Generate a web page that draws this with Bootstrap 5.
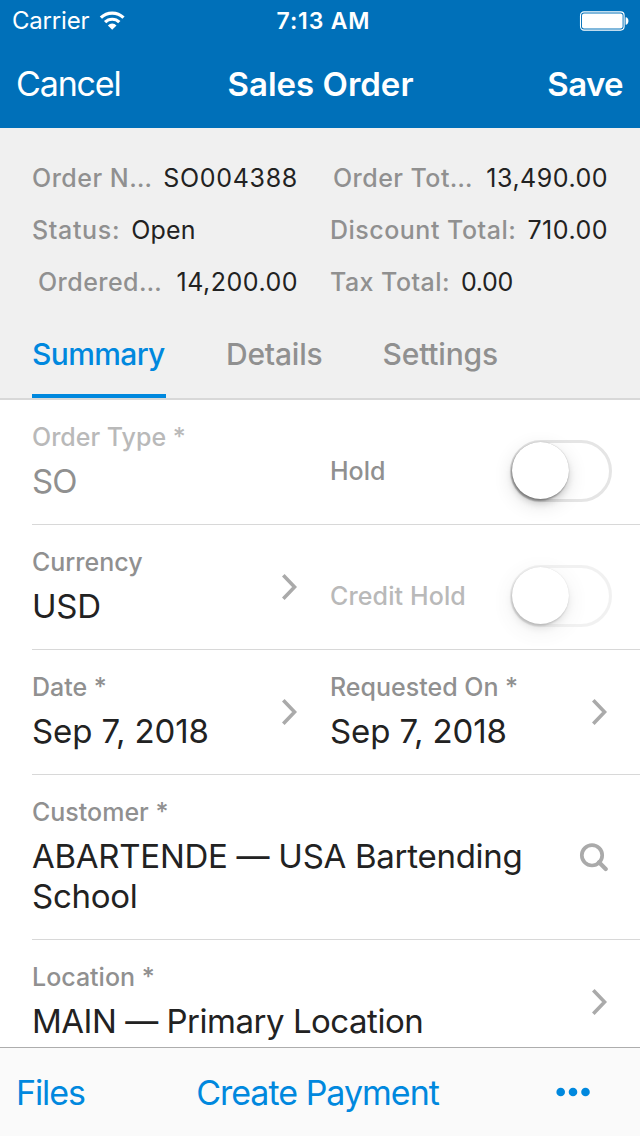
<!DOCTYPE html>
<html lang="en">
<head>
<meta charset="utf-8">
<meta name="viewport" content="width=device-width, initial-scale=1">
<title>Sales Order</title>
<link rel="stylesheet" href="https://cdn.jsdelivr.net/npm/bootstrap@5.3.0/dist/css/bootstrap.min.css">
<style>
  body { font-family: Inter, "Liberation Sans", sans-serif; color: #222; background: #fff; }
  .app { height: 1136px; overflow: hidden; }
  .app a { color: inherit; text-decoration: none; }

  .topbar { background: #0070b9; height: 128px; }
  .status { height: 40px; padding: 1px 11px 0 12px; font-size: 24px; line-height: 40px; letter-spacing: -.2px; }
  .status .clock { font-size: 23px; font-weight: 600; letter-spacing: .85px; padding-left: 6px; }
  .side { flex: 1 1 0; }
  .titlebar { height: 88px; padding: 0 17px 0 16px; font-size: 33px; line-height: 88px; font-weight: 600; letter-spacing: 0; }
  .titlebar .title { padding-left: 2px; }
  .titlebar .cancel { font-size: 34px; font-weight: 400; letter-spacing: -1.15px; }
  .titlebar .save { letter-spacing: -.6px; }

  .overview { background: #f0f0f0; height: 272px; border-bottom: 2px solid #d8d8d8; }
  .facts { height: 190px; padding: 24px 32px 0; column-gap: 32px; font-size: 25px; line-height: 52px; letter-spacing: .5px; }
  .facts .col-a { width: 266px; }
  .facts .col-b { width: 278px; }
  .tag { color: #909090; font-weight: 500; letter-spacing: .5px; }
  .tight { letter-spacing: .45px; }
  .status-tag { letter-spacing: .65px; margin-right: 11px; }
  .number { letter-spacing: .7px; }
  .near { letter-spacing: .2px; }
  .inset-1 { padding-left: 6px; }
  .inset-2 { padding-left: 3px; }
  .zero { letter-spacing: -.3px; margin-left: 11px; }

  .tabs { height: 80px; padding-left: 32px; gap: 60px; font-size: 30px; font-weight: 500; line-height: 36px; color: #909090; letter-spacing: -.2px; }
  .tabs a { padding-top: 18px; height: 80px; }
  .tabs .active { color: #0088de; border-bottom: 4px solid #0088de; letter-spacing: -.62px; width: 134px; }

  .fields { padding-left: 32px; }
  .line { border-bottom: 1px solid #d8d8d8; min-height: 125px; }
  .half { width: 298px; }
  .field { padding: 22px 0 23px; }
  .cap { color: #909090; font-size: 25px; font-weight: 500; line-height: 30px; margin-bottom: 9px; letter-spacing: 0; }
  .val { font-size: 33px; line-height: 40px; letter-spacing: -.1px; }
  .customer { width: 510px; }
  .company { letter-spacing: -.27px; }
  .code { letter-spacing: -.2px; }
  .place { letter-spacing: -.48px; }
  .dim { color: #b9b9b9; }
  .dimval { color: #909090; letter-spacing: -.9px; }
  .switch-cap { padding-top: 18px; margin-bottom: 0; }
  .credit { letter-spacing: .12px; }
  .chev { width: 16px; height: 28px; margin-right: 33px; }
  .lens { width: 30px; height: 30px; margin-right: 32px; }

  .toggle { width: 102px; height: 62px; margin: 17px 28px 0 0; border: 3px solid #e5e5e5; border-radius: 31px; }
  .knob { width: 57px; height: 57px; margin: -.5px 0 0 -.8px; border-radius: 50%; background: #fff;
          box-shadow: 0 0 1px rgba(0,0,0,.3), -1px 2px 2px rgba(0,0,0,.32), 0 5px 6px rgba(0,0,0,.13), 0 6px 20px rgba(0,0,0,.12); }
  .toggle.off { opacity: .5; }

  .bottombar { height: 89px; background: #fafafa; border-top: 1px solid #adadad; color: #0088de;
               font-size: 34px; line-height: 90px; padding: 0 16px; letter-spacing: -1px; }
  .bottombar .files { letter-spacing: -1.1px; }
  .bottombar .pay { padding-right: 5px; }
  .more { margin-right: 33px; margin-bottom: 1px; }
</style>
<script src="https://cdn.jsdelivr.net/npm/bootstrap@5.3.0/dist/js/bootstrap.bundle.min.js"></script>
</head>
<body>
<div class="app d-flex flex-column">
  <header class="topbar text-white flex-shrink-0">
    <div class="status d-flex align-items-center">
      <div class="side d-flex align-items-center">
        <span>Carrier</span>
        <svg class="ms-2" width="30" height="20" viewBox="0 0 30 20" aria-hidden="true">
          <g transform="translate(2.2)">
            <path d="M1.7 6.7a16 16 0 0 1 22.6 0" fill="none" stroke="#fff" stroke-width="3.2"/>
            <path d="M5.9 11.2a10 10 0 0 1 14.2 0" fill="none" stroke="#fff" stroke-width="3.2"/>
            <path d="M8.7 14.4a6 6 0 0 1 8.6 0L13 18.8z" fill="#fff"/>
          </g>
        </svg>
      </div>
      <span class="clock">7:13 AM</span>
      <div class="side d-flex justify-content-end">
        <svg width="50" height="20" viewBox="0 0 50 20" aria-hidden="true">
          <rect x="1.5" y=".9" width="43.6" height="18.2" rx="3.5" fill="none" stroke="#fff" stroke-width="1.1"/>
          <rect x="3" y="2.4" width="40.6" height="15.2" rx="2" fill="#fff"/>
          <path d="M46.6 6.3c3.8 0 3.8 7.4 0 7.4z" fill="#fff"/>
        </svg>
      </div>
    </div>
    <nav class="titlebar d-flex">
      <a class="side cancel" href="#">Cancel</a>
      <span class="title">Sales Order</span>
      <a class="side save text-end" href="#">Save</a>
    </nav>
  </header>

  <section class="overview flex-shrink-0">
    <div class="facts d-flex">
      <div class="col-a">
        <div class="d-flex justify-content-between"><span class="tag">Order N…</span><span class="number">SO004388</span></div>
        <div class="d-flex"><span class="tag status-tag">Status:</span><span class="near">Open</span></div>
        <div class="d-flex justify-content-between inset-1"><span class="tag tight">Ordered…</span><span>14,200.00</span></div>
      </div>
      <div class="col-b">
        <div class="d-flex justify-content-between inset-2"><span class="tag tight">Order Tot…</span><span>13,490.00</span></div>
        <div class="d-flex justify-content-between"><span class="tag">Discount Total:</span><span>710.00</span></div>
        <div class="d-flex"><span class="tag tight">Tax Total:</span><span class="zero">0.00</span></div>
      </div>
    </div>
    <nav class="tabs d-flex">
      <a class="active" href="#">Summary</a>
      <a href="#">Details</a>
      <a href="#">Settings</a>
    </nav>
  </section>

  <main class="fields flex-grow-1 overflow-hidden">
    <div class="line d-flex">
      <div class="half field"><div class="cap dim">Order Type *</div><div class="val dimval">SO</div></div>
      <div class="flex-grow-1 d-flex align-items-center justify-content-between">
        <span class="cap switch-cap">Hold</span>
        <div class="toggle" role="switch" aria-checked="false"><div class="knob"></div></div>
      </div>
    </div>
    <div class="line d-flex">
      <div class="half d-flex align-items-center justify-content-between">
        <div class="field"><div class="cap">Currency</div><div class="val code">USD</div></div>
        <svg class="chev" viewBox="0 0 16 28"><path d="M2.3 2.3 13.6 14 2.3 25.7" fill="none" stroke="#aaa" stroke-width="3.6"/></svg>
      </div>
      <div class="flex-grow-1 d-flex align-items-center justify-content-between">
        <span class="cap dim switch-cap credit">Credit Hold</span>
        <div class="toggle off" role="switch" aria-checked="false"><div class="knob"></div></div>
      </div>
    </div>
    <div class="line d-flex">
      <div class="half d-flex align-items-center justify-content-between">
        <div class="field"><div class="cap">Date *</div><div class="val">Sep 7, 2018</div></div>
        <svg class="chev" viewBox="0 0 16 28"><path d="M2.3 2.3 13.6 14 2.3 25.7" fill="none" stroke="#aaa" stroke-width="3.6"/></svg>
      </div>
      <div class="flex-grow-1 d-flex align-items-center justify-content-between">
        <div class="field"><div class="cap">Requested On *</div><div class="val">Sep 7, 2018</div></div>
        <svg class="chev" viewBox="0 0 16 28"><path d="M2.3 2.3 13.6 14 2.3 25.7" fill="none" stroke="#aaa" stroke-width="3.6"/></svg>
      </div>
    </div>
    <div class="line d-flex align-items-center justify-content-between">
      <div class="field customer"><div class="cap">Customer *</div><div class="val company">ABARTENDE — USA Bartending School</div></div>
      <svg class="lens" viewBox="0 0 30 30"><circle cx="14" cy="13.3" r="10.2" fill="none" stroke="#aaa" stroke-width="3.7"/><path d="m21 20.2 6.7 6.7" stroke="#aaa" stroke-width="4.2" stroke-linecap="round"/></svg>
    </div>
    <div class="line d-flex align-items-center justify-content-between">
      <div class="field"><div class="cap">Location *</div><div class="val place">MAIN — Primary Location</div></div>
      <svg class="chev" viewBox="0 0 16 28"><path d="M2.3 2.3 13.6 14 2.3 25.7" fill="none" stroke="#aaa" stroke-width="3.6"/></svg>
    </div>
  </main>

  <footer class="bottombar d-flex flex-shrink-0">
    <a class="side files" href="#">Files</a>
    <a class="pay" href="#">Create Payment</a>
    <a class="side d-flex justify-content-end align-items-center" href="#" aria-label="More">
      <svg class="more" width="36" height="10" viewBox="0 0 36 10" fill="#0088de"><circle cx="5.7" cy="5" r="4.3"/><circle cx="18" cy="5" r="4.3"/><circle cx="30.5" cy="5" r="4.3"/></svg>
    </a>
  </footer>
</div>
</body>
</html>
